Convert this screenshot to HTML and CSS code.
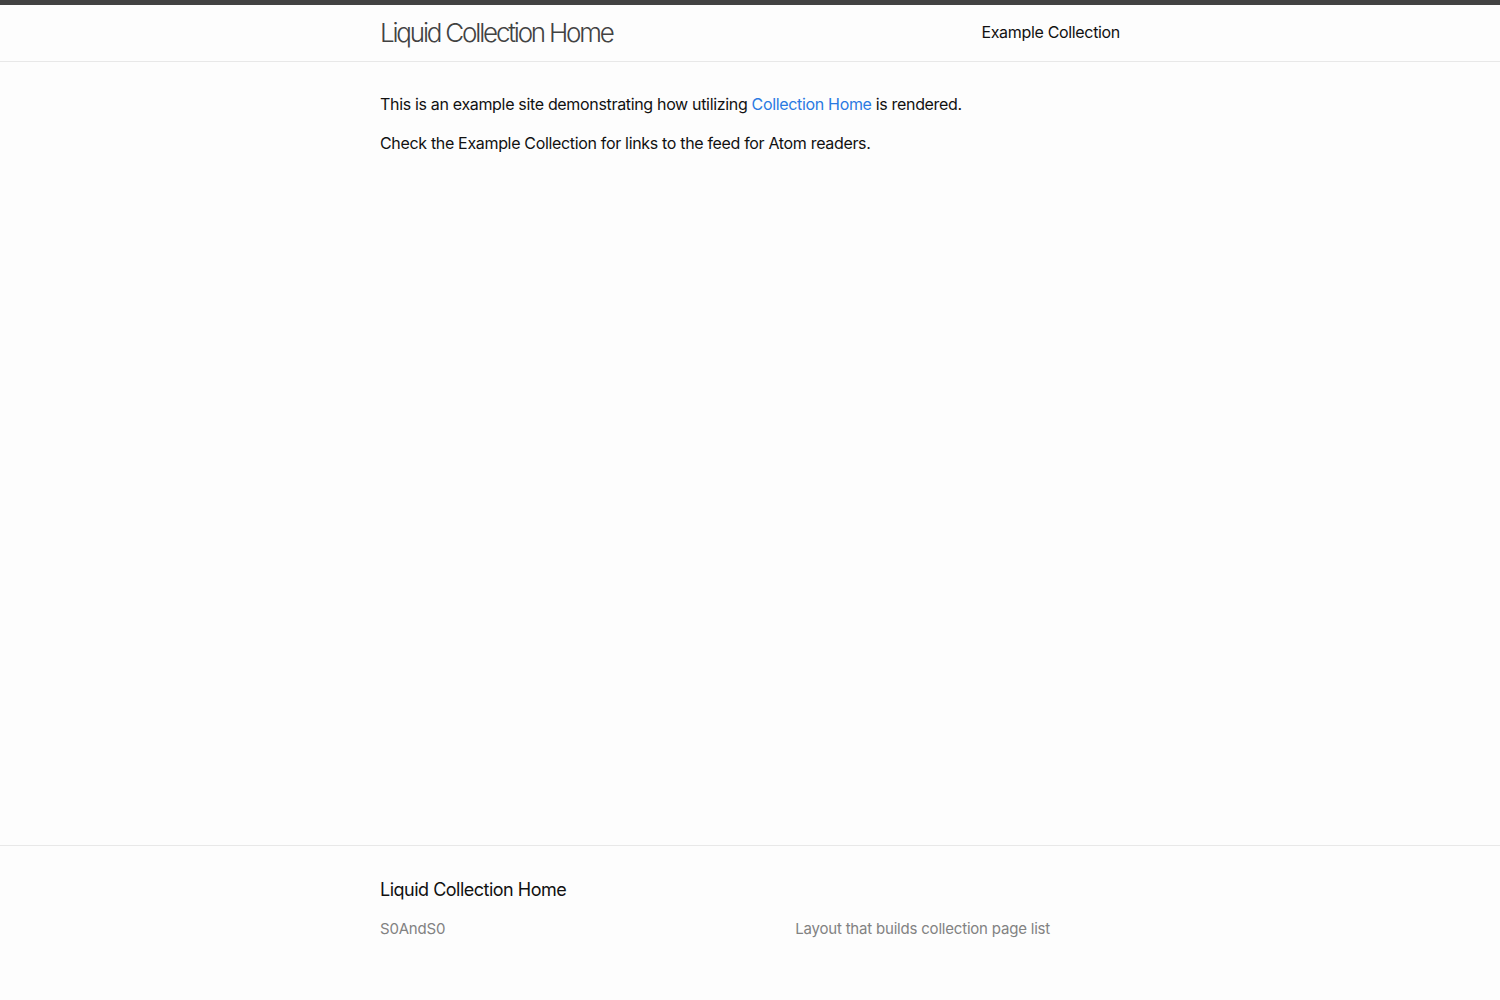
FILE: index.html
```html
<!DOCTYPE html>
<html lang="en">
<head>
<meta charset="utf-8">
<title>Liquid Collection Home</title>
<link rel="stylesheet" href="styles.css">
</head>
<body>
<header class="site-header">
  <div class="wrapper header-wrap">
    <a class="site-title" href="#">Liquid Collection Home</a>
    <nav class="site-nav">
      <a class="page-link" href="#">Example Collection</a>
    </nav>
  </div>
</header>
<main class="page-content">
  <div class="wrapper">
    <p>This is an example site demonstrating how utilizing <a class="link" href="#">Collection Home</a> is rendered.</p>
    <p>Check the Example Collection for links to the feed for Atom readers.</p>
  </div>
</main>
<footer class="site-footer">
  <div class="wrapper">
    <h2 class="footer-heading">Liquid Collection Home</h2>
    <div class="footer-col-wrapper">
      <div class="footer-col footer-col-1">
        <ul class="contact-list">
          <li>S0AndS0</li>
        </ul>
      </div>
      <div class="footer-col footer-col-2"></div>
      <div class="footer-col footer-col-3">
        <p>Layout that builds collection page list</p>
      </div>
    </div>
  </div>
</footer>
</body>
</html>
```
FILE: styles.css
```css
* { box-sizing: content-box; }
html, body { margin: 0; padding: 0; }
body {
  font: 400 16px/1.5 Inter, "Liberation Sans", sans-serif;
  letter-spacing: -0.33px;
  color: #111;
  background: #fdfdfd;
  min-height: 100vh;
  display: flex;
  flex-direction: column;
}
a { text-decoration: none; }
p, ul, h2 { margin: 0; }
.wrapper {
  max-width: 740px;
  margin: 0 auto;
  padding: 0 30px;
}
.site-header {
  border-top: 5px solid #424242;
  border-bottom: 1px solid #e8e8e8;
  min-height: 55.95px;
}
.header-wrap {
  display: flex;
  justify-content: space-between;
  align-items: flex-start;
}
.site-title {
  font-size: 26px;
  font-weight: 300;
  letter-spacing: -2.2px;
  line-height: 56px;
  color: #424242;
}
.site-nav { line-height: 54px; }
.page-link { color: #111; line-height: 1.5; }
.page-content {
  padding: 30px 0;
  flex: 1;
}
.page-content p { margin-bottom: 15px; }
.link { color: #2a7ae2; }
.site-footer {
  border-top: 1px solid #e8e8e8;
  padding: 30px 0;
}
.footer-heading {
  font-size: 18px;
  font-weight: 400;
  line-height: 1.5;
  letter-spacing: -0.5px;
  margin-bottom: 15px;
}
.footer-col-wrapper {
  font-size: 15px;
  letter-spacing: -0.2px;
  color: #828282;
  margin-left: -15px;
  display: flex;
}
.footer-col {
  margin-bottom: 15px;
  padding-left: 15px;
}
.footer-col p { margin-bottom: 15px; }
.footer-col-1 { width: calc(35% - 15px); }
.footer-col-2 { width: calc(20% - 15px); }
.footer-col-3 { width: calc(45% - 15px); }
.contact-list { list-style: none; padding: 0; margin-bottom: 15px; }
```
